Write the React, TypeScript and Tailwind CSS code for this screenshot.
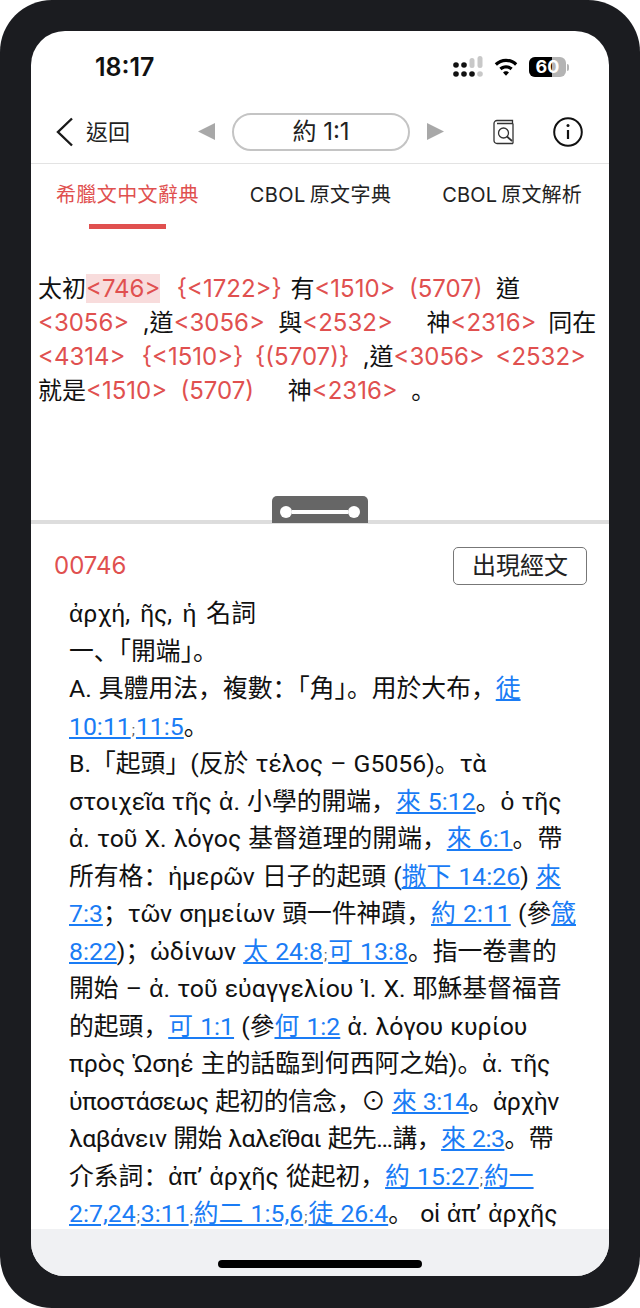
import React from "react";

const FONT = 'Inter, "Noto Sans CJK TC", "Noto Sans", sans-serif';

type Seg = string | { l: string } | { s: string };
const L = (l: string) => ({ l });
const S = { s: ";" };

const lines: Seg[][] = [
  ["ἀρχή, ῆς, ἡ 名詞"],
  ["一、「開端」。"],
  ["A. 具體用法，複數：「角」。用於大布，", L("徒")],
  [L("10:11"), S, L("11:5"), "。"],
  ["B.「起頭」(反於 τέλος – G5056)。τὰ"],
  ["στοιχεῖα τῆς ἀ. 小學的開端，", L("來 5:12"), "。ὁ τῆς"],
  ["ἀ. τοῦ Χ. λόγος 基督道理的開端，", L("來 6:1"), "。帶"],
  ["所有格：ἡμερῶν 日子的起頭 (", L("撒下 14:26"), ") ", L("來")],
  [L("7:3"), "；τῶν σημείων 頭一件神蹟，", L("約 2:11"), " (參", L("箴")],
  [L("8:22"), ")；ὠδίνων ", L("太 24:8"), S, L("可 13:8"), "。指一卷書的"],
  ["開始 – ἀ. τοῦ εὐαγγελίου Ἰ. Χ. 耶穌基督福音"],
  ["的起頭，", L("可 1:1"), " (參", L("何 1:2"), " ἀ. λόγου κυρίου"],
  ["πρὸς Ὡσηέ 主的話臨到何西阿之始)。ἀ. τῆς"],
  ["ὑποστάσεως 起初的信念，⊙ ", L("來 3:14"), "。ἀρχὴν"],
  ["λαβάνειν 開始 λαλεῖθαι 起先…講，", L("來 2:3"), "。帶"],
  ["介系詞：ἀπ’ ἀρχῆς 從起初，", L("約 15:27"), S, L("約一")],
  [L("2:7,24"), S, L("3:11"), S, L("約二 1:5,6"), S, L("徒 26:4"), "。 οἱ ἀπ’ ἀρχῆς"],
];

const lineClass: Record<number, string> = {
  0: "[word-spacing:4px]",
  13: "tracking-[-0.5px]",
  14: "tracking-[-0.5px]",
};

function P({ t }: { t: string }) {
  return (
    <>
      {t.split(/([，。、；：「」])/).map((part, i) =>
        i % 2 === 1 ? (
          <span key={i} className="font-['Noto_Sans_CJK_SC',sans-serif] leading-none">{part}</span>
        ) : (
          <span key={i}>{part}</span>
        )
      )}
    </>
  );
}

function R({ children, hl, className }: { children: React.ReactNode; hl?: boolean; className?: string }) {
  return <span className={(hl ? "text-[#e0504f] bg-[#f8dcdc] " : "text-[#e0504f] ") + (className ?? "")}>{children}</span>;
}

function StatusIcons() {
  return (
    <div className="flex items-center gap-[10px]">
      <svg width="32" height="22" viewBox="0 0 32 22">
        <circle cx="4" cy="9" r="2.800" fill="#111" />
        <circle cx="4" cy="18" r="2.800" fill="#111" />
        <circle cx="12" cy="9" r="2.800" fill="#111" />
        <circle cx="12" cy="18" r="2.800" fill="#111" />
        <rect x="17.500" y="2" width="5" height="10" rx="2.500" fill="#c8c8c8" />
        <circle cx="20" cy="18" r="2.800" fill="#111" />
        <rect x="25.500" y="0" width="5" height="12" rx="2.500" fill="#c8c8c8" />
        <circle cx="28" cy="18" r="2.800" fill="#c8c8c8" />
      </svg>
      <svg width="24" height="19" viewBox="0 0 26 20">
        <path d="M13 0.5C8.300 0.5 4 2.400 0.800 5.400L3.200 8C5.800 5.600 9.200 4 13 4s7.200 1.600 9.800 4l2.400-2.600C22 2.400 17.700.5 13 .5z" fill="#000" />
        <path d="M13 7.500C10.200 7.500 7.700 8.600 5.800 10.300l2.400 2.600C9.500 11.700 11.200 11 13 11s3.500.7 4.800 1.900l2.400-2.600C18.300 8.600 15.800 7.500 13 7.500z" fill="#000" />
        <path d="M13 14c-1.300 0-2.400.5-3.200 1.300L13 19l3.200-3.700C15.400 14.500 14.300 14 13 14z" fill="#000" />
      </svg>
      <div className="ml-[1px] flex items-center">
        <div className="relative flex h-[20px] w-[37px] overflow-hidden rounded-[6px] bg-[#b4b4b4]">
          <div className="h-full w-[23px] bg-black" />
          <span className="absolute inset-0 flex items-center justify-center text-[18px] font-bold leading-none text-white">60</span>
        </div>
        <div className="ml-[1px] h-[7px] w-[2px] rounded-r-full bg-[#b4b4b4]" />
      </div>
    </div>
  );
}

export default function App() {
  return (
    <div className="h-[1308px] w-[640px] bg-white" style={{ fontFamily: FONT }}>
      <div className="h-full w-full rounded-[52px] bg-[#1b1c20] p-[31px] pb-[32px]">
        <div className="flex h-full w-full flex-col overflow-hidden rounded-[34px] bg-white">
          {/* status bar */}
          <div className="flex h-[69px] shrink-0 items-center justify-between pl-[64px] pr-[40px] pt-[3px]">
            <span className="text-[25px] font-semibold leading-[30px] text-[#111]">18:17</span>
            <StatusIcons />
          </div>
          {/* nav */}
          <div className="flex h-[64px] shrink-0 items-center border-b border-[#e3e3e3] pl-[24px]">
            <svg width="20" height="30" viewBox="0 0 20 30" fill="none" stroke="#1a1a1a" strokeWidth="2.400">
              <path d="M17 1.500L3 15l14 13.500" />
            </svg>
            <span className="ml-[11px] w-[105px] text-[22px] leading-none text-[#222]">返回</span>
            <svg className="ml-[7px]" width="17" height="17" viewBox="0 0 17 17"><path d="M0 8.500L17 0v17z" fill="#a8a8a8" /></svg>
            <div className="ml-[17px] flex h-[38px] w-[178px] items-center justify-center rounded-full border-2 border-[#c4c4c4] text-[24px] leading-none text-[#222]">約 1:1</div>
            <svg className="ml-[17px]" width="17" height="17" viewBox="0 0 17 17"><path d="M17 8.500L0 0v17z" fill="#a8a8a8" /></svg>
            <svg className="ml-[49px]" width="22" height="26" viewBox="0 0 22 26" fill="none" stroke="#333" strokeWidth="1.300">
              <path d="M20 24.500H4a3 3 0 0 1-3-3V4.500a3 3 0 0 1 3-3h15.500v3H4M20 4.500v20" />
              <circle cx="10.500" cy="14" r="5" />
              <path d="M14 17.500l5 4.500" strokeWidth="1.800" />
            </svg>
            <svg className="ml-[38px]" width="30" height="30" viewBox="0 0 30 30" fill="none" stroke="#111" strokeWidth="2">
              <circle cx="15" cy="15" r="13.800" />
              <path d="M15 13v9" strokeWidth="2.200" />
              <circle cx="15" cy="8.500" r="1.500" fill="#111" stroke="none" />
            </svg>
          </div>
          {/* tabs */}
          <div className="flex h-[65px] shrink-0 justify-between pl-[25px] pr-[27px] text-[20px] leading-[20px] text-[#222]">
            <div className="flex flex-col items-center">
              <span className="mt-[21px] text-[#e0504f] tracking-[0.4px]">希臘文中文辭典</span>
              <div className="mt-[19px] h-[5px] w-[77px] bg-[#e0504f]" />
            </div>
            <span className="mt-[21px] tracking-[0.4px]">{"CBOL\u2009原文字典"}</span>
            <span className="mt-[21px] tracking-[0.2px]">{"CBOL\u2009原文解析"}</span>
          </div>
          {/* verse */}
          <div className="h-[267px] shrink-0 whitespace-pre pl-[7px] pt-[43px] text-[24px] leading-[34px] text-[#111]">
            <div className="h-[34px]">太初<R hl>{"<746>"}</R>{"  "}<R className="ml-[3px]">{"{<1722>}"}</R><span className="ml-[2px]">{" 有"}</span><R>{"<1510>"}</R>{"  "}<R>(5707)</R>{"  道"}</div>
            <div className="h-[34px]"><R>{"<3056>"}</R>{"  ,道"}<R>{"<3056>"}</R>{"  與"}<R>{"<2532>"}</R>{"     神"}<R>{"<2316>"}</R><span className="ml-[5px]">{" 同在"}</span></div>
            <div className="h-[34px]"><R>{"<4314>"}</R>{"  "}<R className="ml-[3px]">{"{<1510>}"}</R>{" "}<R className="ml-[5px]">{"{(5707)}"}</R>{"  "}<span>,道</span><R>{"<3056>"}</R><span className="ml-[4px]">{" "}</span><R>{"<2532>"}</R></div>
            <div className="h-[34px]">就是<R>{"<1510>"}</R>{"  "}<R>(5707)</R>{"     神"}<R>{"<2316>"}</R>{"  "}<P t="。" /></div>
          </div>
          {/* divider */}
          <div className="flex h-[28px] shrink-0 flex-col items-center justify-end">
            <div className="relative z-10 -mb-[3px] h-[27px] w-[96px] rounded-t-[5px] bg-[#666]">
              <div className="flex items-center justify-center pt-[10px]">
                <div className="h-[12px] w-[12px] rounded-full bg-white" />
                <div className="h-[4px] w-[56px] bg-white" />
                <div className="h-[12px] w-[12px] rounded-full bg-white" />
              </div>
            </div>
            <div className="h-[4px] w-full bg-[#dddddd]" />
          </div>
          {/* detail */}
          <div className="min-h-0 flex-1 overflow-hidden">
            <div className="flex h-[71px] items-start justify-between pl-[23px] pr-[22px] pt-[23px]">
              <span className="text-[24px] leading-[38px] text-[#e0504f]">00746</span>
              <span className="flex h-[38px] w-[134px] items-center justify-center rounded-[5px] border border-[#777] text-[24px] leading-none text-[#222]">出現經文</span>
            </div>
            <div className="whitespace-pre pl-[38px] font-['Roboto','Noto_Sans_CJK_TC',sans-serif] text-[24.800px] leading-[37.500px] text-[#111] [word-spacing:1px]">
              {lines.map((line, i) => (
                <div key={i} className={"h-[37.500px] " + (lineClass[i] ?? "")}>
                  {line.map((seg, j) =>
                    typeof seg === "string" ? (
                      <P key={j} t={seg} />
                    ) : "l" in seg ? (
                      <span key={j} className="text-[#1a7cf5] underline">{seg.l}</span>
                    ) : (
                      <span key={j} className="px-[1px] text-[15px] text-[#555]">{seg.s}</span>
                    )
                  )}
                </div>
              ))}
            </div>
          </div>
          {/* bottom bar */}
          <div className="flex h-[47px] shrink-0 justify-center bg-[#f0f1f3] pt-[31px]">
            <div className="h-[8px] w-[204px] rounded-full bg-black" />
          </div>
        </div>
      </div>
    </div>
  );
}
